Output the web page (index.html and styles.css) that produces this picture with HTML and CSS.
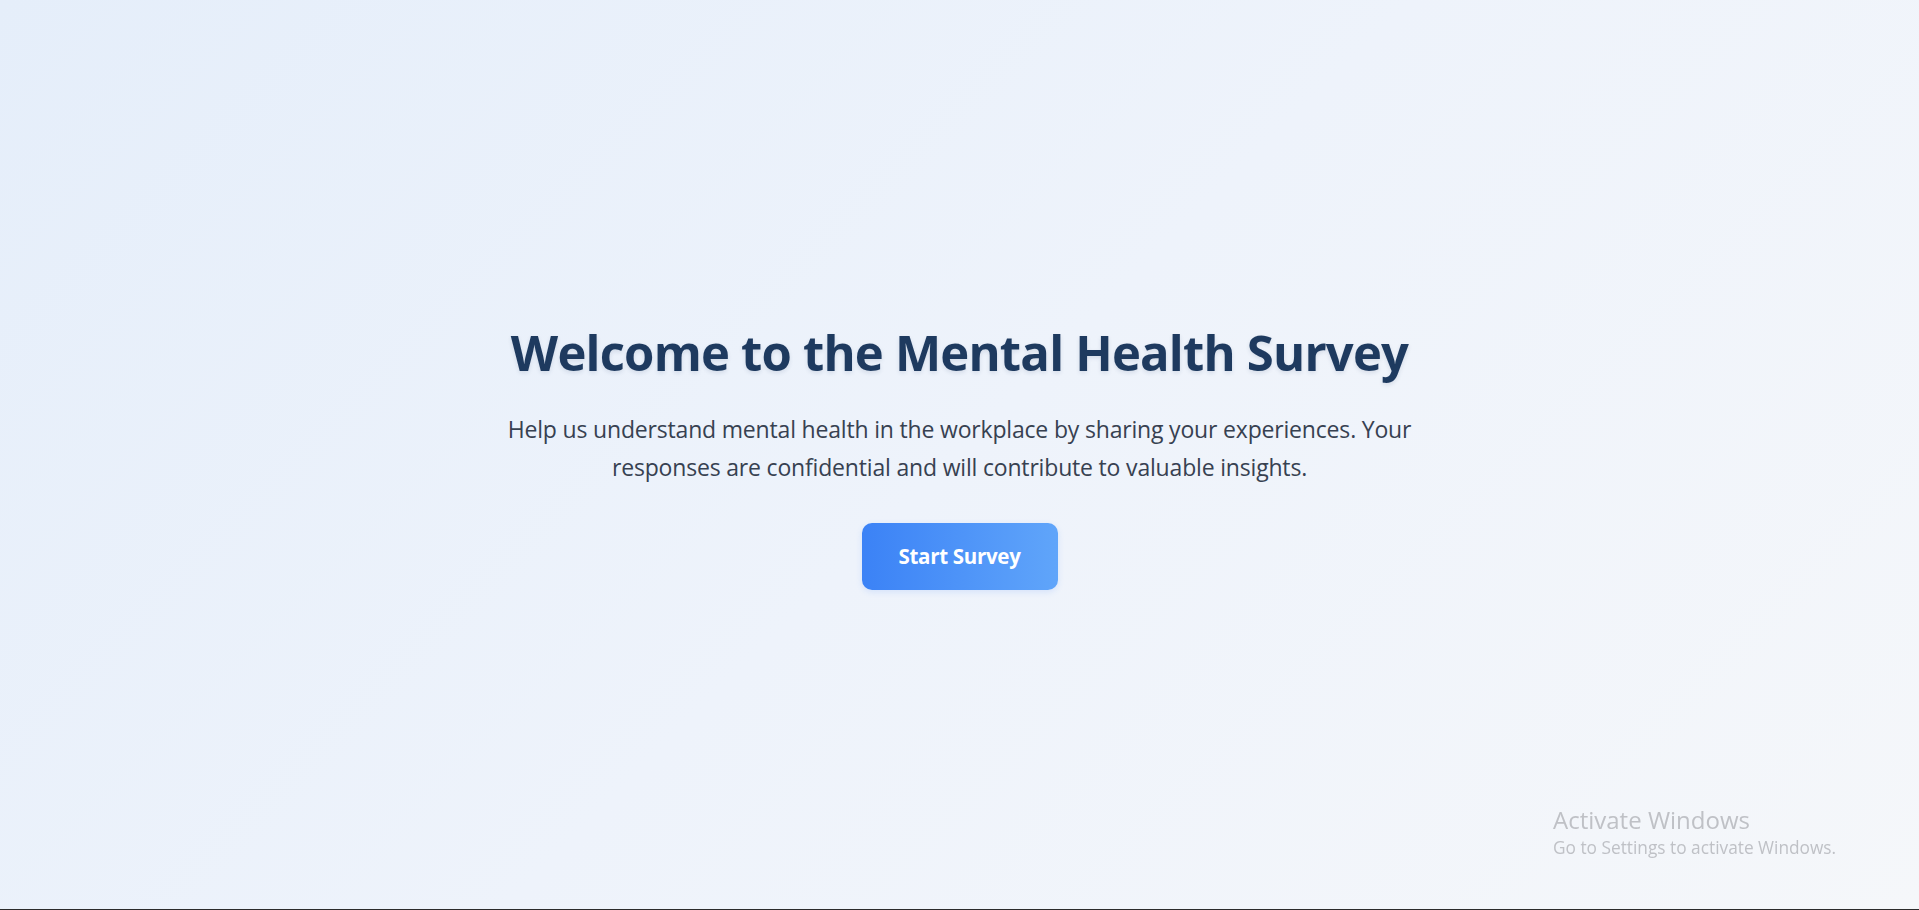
FILE: index.html
```html
<!DOCTYPE html>
<html lang="en">
<head>
<meta charset="utf-8">
<title>Mental Health Survey</title>
<link rel="stylesheet" href="styles.css">
</head>
<body>
<main class="welcome">
  <h1 class="welcome-title">Welcome to the Mental Health Survey</h1>
  <p class="welcome-text">Help us understand mental health in the workplace by sharing your experiences. Your responses are confidential and will contribute to valuable insights.</p>
  <button class="start-btn" type="button">Start Survey</button>
</main>
<div class="watermark">
  <div class="watermark-title">Activate Windows</div>
  <div class="watermark-sub">Go to Settings to activate Windows.</div>
</div>
<div class="taskbar-edge"></div>
</body>
</html>
```
FILE: styles.css
```css
* { box-sizing: border-box; }
html, body { height: 100%; }
body {
  margin: 0;
  font-family: "Open Sans", "Noto Sans", sans-serif;
  background: linear-gradient(135deg, #e5eefa 0%, #eef3fb 50%, #f5f7fa 100%);
  overflow: hidden;
}
.welcome {
  min-height: 100vh;
  padding-top: 3px;
  display: flex;
  flex-direction: column;
  align-items: center;
  justify-content: center;
  text-align: center;
}
.welcome-title {
  margin: 0 0 28px;
  font-size: 49px;
  line-height: 1.2;
  font-weight: 700;
  color: #1e3a5f;
  letter-spacing: -0.8px;
  text-shadow: 0 2px 4px rgba(30, 58, 95, 0.12);
}
.welcome-text {
  margin: 0 0 37px;
  max-width: 930px;
  font-size: 23px;
  line-height: 38px;
  color: #374151;
  letter-spacing: -0.18px;
}
.start-btn {
  width: 196px;
  height: 67px;
  border: none;
  border-radius: 10px;
  background: linear-gradient(90deg, #3b82f6, #60a5fa);
  color: #fff;
  font-family: inherit;
  font-size: 20.5px;
  font-weight: 700;
  letter-spacing: -0.3px;
  cursor: pointer;
  box-shadow: 0 2px 6px rgba(59, 130, 246, 0.15);
}
.watermark {
  position: fixed;
  left: 1553px;
  top: 805px;
  color: #bfc1c6;
  font-family: "Open Sans", sans-serif;
}
.watermark-title {
  font-size: 24px;
  line-height: 30px;
}
.watermark-sub {
  font-size: 17.3px;
  line-height: 24px;
  margin-top: 1px;
}
.taskbar-edge {
  position: fixed;
  left: 0;
  right: 0;
  bottom: 0;
  height: 1px;
  background: #2b2b2b;
}
```
